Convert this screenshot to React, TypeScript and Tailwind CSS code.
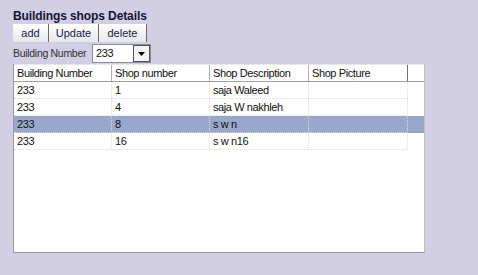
import React from "react";

const cols = ["Building Number", "Shop number", "Shop Description", "Shop Picture"];
const rows = [
  ["233", "1", "saja Waleed", ""],
  ["233", "4", "saja W nakhleh", ""],
  ["233", "8", "s w n", ""],
  ["233", "16", "s w n16", ""],
];
const widths = ["w-[98px]", "w-[98px]", "w-[99px]", "w-[99px]"];

export default function App() {
  return (
    <div
      className="w-[478px] h-[275px] bg-[#d2cfe4] text-[11px] tracking-[-0.4px] text-[#111] overflow-hidden"
      style={{ fontFamily: "'Liberation Sans', Arial, sans-serif" }}
    >
      <div className="pl-[13px] pt-[8px] flex flex-col">
        <div className="font-bold text-[#141438] h-[16px] leading-[16px] text-[12px] tracking-[-0.1px]">Buildings shops Details</div>
        <div className="flex h-[18px]">
          {[
            ["add", "w-[36px]"],
            ["Update", "w-[50px]"],
            ["delete", "w-[48px]"],
          ].map(([t, w]) => (
            <div
              key={t}
              className={`${w} h-[18px] flex items-center justify-center bg-gradient-to-b from-white to-[#e6e8ef] border-r border-[#6a6a6a] text-[#1a1a4a] text-[11px] tracking-normal leading-none`}
            >
              {t}
            </div>
          ))}
        </div>
        <div className="flex items-center h-[21px] mt-[1px]">
          <div className="w-[79px] whitespace-nowrap text-[#303030] text-[10.5px] tracking-[-0.3px]">Building Number</div>
          <div className="w-[59px] h-[19px] bg-white border border-[#8a8a9a] flex items-center justify-between">
            <span className="pl-[3px] text-[11px]">233</span>
            <div className="w-[17px] h-[17px] border border-[#555] bg-[#f4f4f4] flex items-center justify-center">
              <svg width="7" height="4" viewBox="0 0 7 4"><path d="M0 0h7L3.5 4z" fill="#000" /></svg>
            </div>
          </div>
        </div>
        <div className="w-[412px] h-[189px] bg-white border-l border-b border-[#9a9a9a] border-r border-r-[#c0c0c0] flex flex-col">
          <div className="flex h-[18px] border-b border-[#a0a0a0] border-t border-t-[#e8e8e8]">
            {cols.map((c, i) => (
              <div
                key={c}
                className={`${widths[i]} h-full px-[3px] flex items-center whitespace-nowrap border-r ${i === 3 ? "border-[#707070]" : "border-[#b0b0b0]"}`}
              >
                {c}
              </div>
            ))}
          </div>
          {rows.map((r, ri) => (
            <div key={ri} className={`flex h-[17px] ${ri === 2 ? "bg-[#98a8cc]" : ""}`}>
              {r.map((v, i) => (
                <div
                  key={i}
                  className={`${widths[i]} h-full px-[3px] flex items-center whitespace-nowrap border-r border-b border-dotted border-[#d8e0d0]`}
                >
                  {v}
                </div>
              ))}
            </div>
          ))}
        </div>
      </div>
    </div>
  );
}
